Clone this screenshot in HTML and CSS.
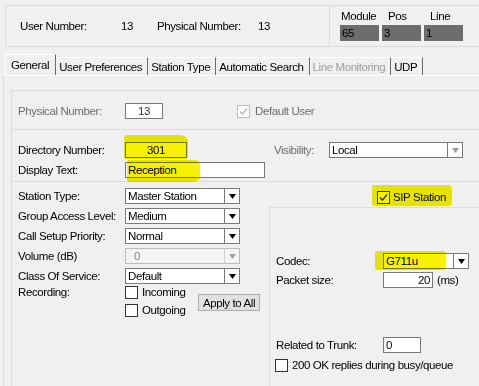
FILE: index.html
```html
<!DOCTYPE html>
<html lang="en">
<head>
    <meta charset="UTF-8">
    <title>User Settings</title>
    <link rel="stylesheet" href="styles.css">
</head>
<body>
    <div class="header">
        <div class="ids">
            <span class="id-label">User Number:</span>
            <span class="id-value">13</span>
            <span class="id-label">Physical Number:</span>
            <span class="id-value">13</span>
        </div>
        <div class="location">
            <div class="loc-col">
                <span class="loc-label">Module</span>
                <span class="loc-box">65</span>
            </div>
            <div class="loc-col">
                <span class="loc-label loc-label-indent">Pos</span>
                <span class="loc-box">3</span>
            </div>
            <div class="loc-col">
                <span class="loc-label loc-label-indent">Line</span>
                <span class="loc-box">1</span>
            </div>
        </div>
    </div>

    <div class="tabs">
        <div class="tab tab-active">General</div>
        <div class="tab">User Preferences</div>
        <div class="tab">Station Type</div>
        <div class="tab">Automatic Search</div>
        <div class="tab tab-disabled">Line Monitoring</div>
        <div class="tab">UDP</div>
    </div>

    <div class="page">
        <div class="group">
            <!-- physical number / default user -->
            <div class="section section-phys">
                <span class="field-label disabled">Physical Number:</span>
                <span class="input input-phys">13</span>
                <label class="check check-default">
                    <span class="box box-disabled">
                        <svg viewBox="0 0 11 11" width="11" height="11"><polyline points="2,5.5 4.5,8 9,2.5" fill="none" stroke="#b5b5b5" stroke-width="1.3"/></svg>
                    </span>
                    <span class="disabled">Default User</span>
                </label>
            </div>

            <!-- directory number / display text -->
            <div class="section section-dir">
                <div class="row">
                    <span class="field-label">Directory Number:</span>
                    <span class="hl">
                        <span class="input input-dir">301</span>
                        <span class="mark mark-dir"></span>
                    </span>
                    <span class="vis-label">Visibility:</span>
                    <span class="select select-vis">
                        <span class="select-val">Local</span>
                        <span class="select-btn">
                            <svg viewBox="0 0 7 5" width="7" height="5"><path d="M0 0h7l-3.5 5z" fill="#9a9a9a"/></svg>
                        </span>
                    </span>
                </div>
                <div class="row">
                    <span class="field-label">Display Text:</span>
                    <span class="hl">
                        <span class="input input-display">Reception</span>
                        <span class="mark mark-display"></span>
                    </span>
                </div>
            </div>

            <!-- station settings -->
            <div class="section section-station">
                <div class="station-left">
                    <div class="row">
                        <span class="field-label">Station Type:</span>
                        <span class="select select-station">
                            <span class="select-val">Master Station</span>
                            <span class="select-btn"><svg viewBox="0 0 7 5" width="7" height="5"><path d="M0 0h7l-3.5 5z"/></svg></span>
                        </span>
                    </div>
                    <div class="row">
                        <span class="field-label">Group Access Level:</span>
                        <span class="select select-station">
                            <span class="select-val">Medium</span>
                            <span class="select-btn"><svg viewBox="0 0 7 5" width="7" height="5"><path d="M0 0h7l-3.5 5z"/></svg></span>
                        </span>
                    </div>
                    <div class="row">
                        <span class="field-label">Call Setup Priority:</span>
                        <span class="select select-station">
                            <span class="select-val">Normal</span>
                            <span class="select-btn"><svg viewBox="0 0 7 5" width="7" height="5"><path d="M0 0h7l-3.5 5z"/></svg></span>
                        </span>
                    </div>
                    <div class="row">
                        <span class="field-label">Volume (dB)</span>
                        <span class="select select-station select-disabled">
                            <span class="select-val">0</span>
                            <span class="select-btn"><svg viewBox="0 0 7 5" width="7" height="5"><path d="M0 0h7l-3.5 5z" fill="#a0a0a0"/></svg></span>
                        </span>
                    </div>
                    <div class="row">
                        <span class="field-label">Class Of Service:</span>
                        <span class="select select-station">
                            <span class="select-val">Default</span>
                            <span class="select-btn"><svg viewBox="0 0 7 5" width="7" height="5"><path d="M0 0h7l-3.5 5z"/></svg></span>
                        </span>
                    </div>
                    <div class="row row-recording">
                        <span class="field-label">Recording:</span>
                        <div class="rec-checks">
                            <label class="check"><span class="box"></span>Incoming</label>
                            <label class="check"><span class="box"></span>Outgoing</label>
                        </div>
                        <button class="btn">Apply to All</button>
                    </div>
                </div>

                <div class="station-right">
                    <div class="hl hl-sip">
                        <label class="check check-sip">
                            <span class="box">
                                <svg viewBox="0 0 11 11" width="11" height="11"><polyline points="2,5.5 4.5,8 9,2.5" fill="none" stroke="#333" stroke-width="1.3"/></svg>
                            </span>
                            SIP Station
                        </label>
                        <span class="mark mark-sip"></span>
                    </div>
                    <div class="sip-box">
                        <div class="row">
                            <span class="field-label">Codec:</span>
                            <span class="hl">
                                <span class="select select-codec">
                                    <span class="select-val">G711u</span>
                                    <span class="select-btn"><svg viewBox="0 0 7 5" width="7" height="5"><path d="M0 0h7l-3.5 5z"/></svg></span>
                                </span>
                                <span class="mark mark-codec"></span>
                            </span>
                        </div>
                        <div class="row row-packet">
                            <span class="field-label">Packet size:</span>
                            <span class="input input-packet">20</span>
                            <span class="unit">(ms)</span>
                        </div>
                        <div class="row row-trunk">
                            <span class="field-label">Related to Trunk:</span>
                            <span class="input input-trunk">0</span>
                        </div>
                        <label class="check check-ok"><span class="box"></span>200 OK replies during busy/queue</label>
                    </div>
                </div>
            </div>
        </div>
    </div>
</body>
</html>
```

FILE: styles.css
```css
html, body {
    margin: 0;
}

body {
    width: 479px;
    height: 386px;
    overflow: hidden;
    background: #f0f0f0;
    color: #000;
    font-family: "Liberation Sans", Arial, sans-serif;
    font-size: 11.5px;
    letter-spacing: -0.4px;
    line-height: 16px;
}

.disabled {
    color: #6d6d6d;
}

/* header with user / location numbers */
.header {
    display: flex;
    height: 40px;
    margin: 5px 0 0 5px;
    border: 1px solid #dcdcdc;
    border-right: none;
}

.ids {
    display: flex;
    align-items: center;
    width: 323px;
    padding-left: 14px;
    box-sizing: border-box;
}

.id-label {
    width: 101px;
}

.id-value {
    width: 36px;
}

.location {
    display: flex;
    gap: 3px;
    padding: 2px 0 0 10px;
    border-left: 1px solid #dcdcdc;
}

.loc-col {
    display: flex;
    flex-direction: column;
    gap: 1px;
    width: 39px;
}

.loc-label {
    padding-left: 1px;
}

.loc-label-indent {
    padding-left: 6px;
}

.loc-box {
    height: 16px;
    padding-left: 2px;
    background: #6d6d6d;
}

/* tabs */
.tabs {
    display: flex;
    align-items: flex-end;
    height: 21px;
    margin-top: 7px;
    padding-left: 5px;
}

.tab {
    height: 18px;
    line-height: 18px;
    padding: 0 5px 0 3px;
    border-right: 1px solid #696969;
    border-top: 1px solid #fff;
    box-sizing: border-box;
    white-space: nowrap;
}

.tab-active {
    height: 21px;
    line-height: 20px;
    padding: 0 6px 0 5px;
    border-left: 1px solid #fff;
}

.tab-disabled {
    color: #a0a0a0;
}

.page {
    margin-left: 3px;
    border-left: 1px solid #dcdcdc;
    border-top: 1px solid #fff;
}

.group {
    margin: 14px 0 0 7px;
    border-left: 1px solid #dcdcdc;
    border-top: 1px solid #dcdcdc;
}

.section {
    border-bottom: 1px solid #dcdcdc;
}

.row {
    display: flex;
    align-items: center;
}

.field-label {
    flex: none;
    width: 107px;
    white-space: nowrap;
}

/* text boxes */
.input {
    display: block;
    height: 16px;
    padding: 0 2px;
    line-height: 14px;
    border: 1px solid #7a7a7a;
    background: #fff;
    box-sizing: border-box;
    white-space: nowrap;
}

.select {
    display: flex;
    height: 16px;
    line-height: 14px;
    border: 1px solid #7a7a7a;
    background: #fff;
    box-sizing: border-box;
}

.select-val {
    flex: 1;
    padding-left: 2px;
}

.select-btn {
    display: flex;
    align-items: center;
    justify-content: center;
    width: 14px;
    border-left: 1px solid #7a7a7a;
}

.select-disabled {
    border-color: #bcbcbc;
    background: #f4f4f4;
    color: #8a8a8a;
}

.select-disabled .select-val {
    padding-left: 8px;
}

.select-disabled .select-btn {
    border-left-color: #d0d0d0;
}

/* check boxes */
.check {
    display: flex;
    align-items: center;
    gap: 4px;
    height: 14px;
    white-space: nowrap;
}

.box {
    display: flex;
    align-items: center;
    justify-content: center;
    width: 13px;
    height: 13px;
    border: 1px solid #333;
    background: #fff;
    box-sizing: border-box;
}

.box-disabled {
    border-color: #bcbcbc;
}

/* highlighter strokes */
.hl {
    position: relative;
    display: flex;
}

.mark {
    position: absolute;
    background: #f6f200;
    mix-blend-mode: multiply;
}

.mark-dir {
    left: -1px;
    top: -7px;
    width: 64px;
    height: 24px;
    border-radius: 3px 8px 4px 2px / 4px 6px 3px 2px;
}

.mark-display {
    left: 2px;
    top: -2px;
    width: 73px;
    height: 22px;
    border-radius: 2px 5px 6px 3px;
}

.mark-sip {
    left: -5px;
    top: -5px;
    width: 80px;
    height: 21px;
    border-radius: 2px 4px 3px 2px;
}

.mark-codec {
    left: -8px;
    top: -2px;
    width: 71px;
    height: 19px;
    border-radius: 2px 3px 4px 2px;
}

/* physical number section */
.section-phys {
    display: flex;
    align-items: center;
    padding: 12px 0 10px 6px;
}

.input-phys {
    width: 38px;
    text-align: center;
    color: #333;
}

.check-default {
    margin-left: 74px;
    gap: 5px;
}

/* directory section */
.section-dir {
    display: flex;
    flex-direction: column;
    gap: 4px;
    padding: 12px 0 3px 6px;
}

.input-dir {
    width: 62px;
    text-align: center;
}

.input-display {
    width: 140px;
}

.vis-label {
    width: 127px;
    text-align: right;
    color: #6d6d6d;
}

.select-vis {
    width: 134px;
    margin-left: 15px;
}

/* station section */
.section-station {
    display: flex;
    border-bottom: none;
}

.station-left {
    display: flex;
    flex-direction: column;
    gap: 4px;
    width: 257px;
    padding: 6px 0 0 6px;
    box-sizing: border-box;
}

.select-station {
    width: 115px;
}

.row-recording {
    align-items: flex-start;
    margin-top: -4px;
}

.rec-checks {
    display: flex;
    flex-direction: column;
    gap: 4px;
    width: 73px;
    padding-top: 1px;
}

.btn {
    width: 62px;
    height: 17px;
    margin-top: 10px;
    padding: 0;
    border: 1px solid #adadad;
    background: #e1e1e1;
    font: inherit;
    letter-spacing: inherit;
    line-height: 14px;
    color: #000;
}

.station-right {
    flex: 1;
    padding-top: 8px;
}

.hl-sip {
    margin-left: 108px;
}

.check-sip {
    gap: 3px;
}

.sip-box {
    height: 133px;
    margin-top: 3px;
    padding: 45px 0 0 6px;
    border-left: 1px solid #dcdcdc;
    border-top: 1px solid #dcdcdc;
}

.select-codec {
    width: 86px;
}

.row-packet {
    margin-top: 3px;
}

.input-packet {
    width: 50px;
    text-align: right;
}

.unit {
    margin-left: 4px;
}

.row-trunk {
    margin-top: 49px;
}

.input-trunk {
    width: 38px;
}

.check-ok {
    margin: 5px 0 0 -1px;
}
```
